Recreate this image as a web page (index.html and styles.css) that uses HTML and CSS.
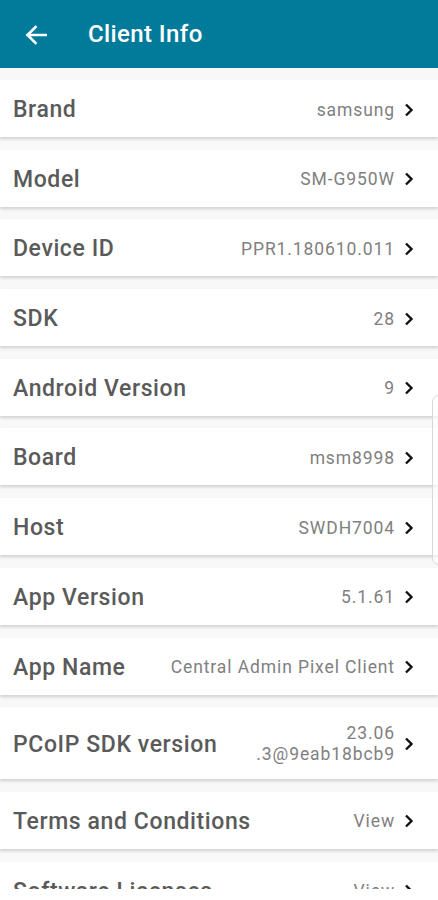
FILE: index.html
```html
<!DOCTYPE html>
<html>
<head>
<meta charset="utf-8">
<link rel="stylesheet" href="styles.css">
</head>
<body>
<div class="app">
  <header class="bar">
    <svg class="back" width="22" height="20" viewBox="0 0 22 20"><path d="M21 10H2.5M10.5 2L2.5 10L10.5 18" fill="none" stroke="#fff" stroke-width="2.6" stroke-linecap="square"/></svg>
    <h1 class="title">Client Info</h1>
  </header>
  <main class="list">
    <div class="row"><span class="label">Brand</span><span class="value">samsung</span><svg class="chev" viewBox="0 0 10 14"><path d="M2 1.5L7.5 7L2 12.5" fill="none" stroke="#111" stroke-width="2.4"/></svg></div>
    <div class="row"><span class="label">Model</span><span class="value">SM-G950W</span><svg class="chev" viewBox="0 0 10 14"><path d="M2 1.5L7.5 7L2 12.5" fill="none" stroke="#111" stroke-width="2.4"/></svg></div>
    <div class="row"><span class="label">Device ID</span><span class="value">PPR1.180610.011</span><svg class="chev" viewBox="0 0 10 14"><path d="M2 1.5L7.5 7L2 12.5" fill="none" stroke="#111" stroke-width="2.4"/></svg></div>
    <div class="row"><span class="label">SDK</span><span class="value">28</span><svg class="chev" viewBox="0 0 10 14"><path d="M2 1.5L7.5 7L2 12.5" fill="none" stroke="#111" stroke-width="2.4"/></svg></div>
    <div class="row"><span class="label">Android Version</span><span class="value">9</span><svg class="chev" viewBox="0 0 10 14"><path d="M2 1.5L7.5 7L2 12.5" fill="none" stroke="#111" stroke-width="2.4"/></svg></div>
    <div class="row"><span class="label">Board</span><span class="value">msm8998</span><svg class="chev" viewBox="0 0 10 14"><path d="M2 1.5L7.5 7L2 12.5" fill="none" stroke="#111" stroke-width="2.4"/></svg></div>
    <div class="row"><span class="label">Host</span><span class="value">SWDH7004</span><svg class="chev" viewBox="0 0 10 14"><path d="M2 1.5L7.5 7L2 12.5" fill="none" stroke="#111" stroke-width="2.4"/></svg></div>
    <div class="row"><span class="label">App Version</span><span class="value">5.1.61</span><svg class="chev" viewBox="0 0 10 14"><path d="M2 1.5L7.5 7L2 12.5" fill="none" stroke="#111" stroke-width="2.4"/></svg></div>
    <div class="row"><span class="label">App Name</span><span class="value">Central Admin Pixel Client</span><svg class="chev" viewBox="0 0 10 14"><path d="M2 1.5L7.5 7L2 12.5" fill="none" stroke="#111" stroke-width="2.4"/></svg></div>
    <div class="row tall"><span class="label">PCoIP SDK version</span><span class="value multi">23.06<br>.3@9eab18bcb9</span><svg class="chev" viewBox="0 0 10 14"><path d="M2 1.5L7.5 7L2 12.5" fill="none" stroke="#111" stroke-width="2.4"/></svg></div>
    <div class="row"><span class="label">Terms and Conditions</span><span class="value">View</span><svg class="chev" viewBox="0 0 10 14"><path d="M2 1.5L7.5 7L2 12.5" fill="none" stroke="#111" stroke-width="2.4"/></svg></div>
    <div class="row"><span class="label">Software Licenses</span><span class="value">View</span><svg class="chev" viewBox="0 0 10 14"><path d="M2 1.5L7.5 7L2 12.5" fill="none" stroke="#111" stroke-width="2.4"/></svg></div>
  </main>
  <div class="foot"></div>
  <div class="edge"></div>
</div>
</body>
</html>
```
FILE: styles.css
```css
* { box-sizing: border-box; }
html, body { margin: 0; padding: 0; }
body {
  width: 438px;
  height: 900px;
  overflow: hidden;
  background: #fff;
  font-family: Roboto, "Noto Sans", sans-serif;
}
.app {
  position: relative;
  height: 900px;
  display: flex;
  flex-direction: column;
}
.bar {
  height: 68px;
  flex: none;
  background: #027b9b;
  display: flex;
  align-items: center;
  padding-left: 25px;
  gap: 41px;
}
.back { display: block; margin-top: 1px; }
.title {
  margin: 0;
  color: #fff;
  font-size: 24px;
  font-weight: 500;
  letter-spacing: 0.4px;
}
.list {
  height: 821px;
  flex: none;
  overflow: hidden;
  background: #f8f8f8;
  padding-top: 12px;
  display: flex;
  flex-direction: column;
  gap: 12.7px;
}
.row {
  flex: none;
  height: 57px;
  background: #fff;
  box-shadow: 0 2px 3px rgba(0,0,0,0.16);
  display: flex;
  align-items: center;
  padding: 2px 24px 0 13px;
}
.row.tall { height: 72px; }
.label {
  font-size: 23px;
  font-weight: 500;
  letter-spacing: 0.6px;
  color: #5a5a5a;
  flex: 1;
  white-space: nowrap;
}
.value {
  font-size: 17.5px;
  letter-spacing: 0.9px;
  color: #808080;
  text-align: right;
  white-space: nowrap;
  margin-right: 9px;
}
.value.multi { line-height: 21px; }
.chev { width: 10px; height: 14px; flex: none; }
.foot { flex: 1; background: #fff; }
.edge {
  position: absolute;
  left: 432px;
  top: 395px;
  width: 20px;
  height: 170px;
  border: 1.5px solid #d8d8d8;
  border-radius: 7px;
  background: rgba(255,255,255,0.6);
}
```
